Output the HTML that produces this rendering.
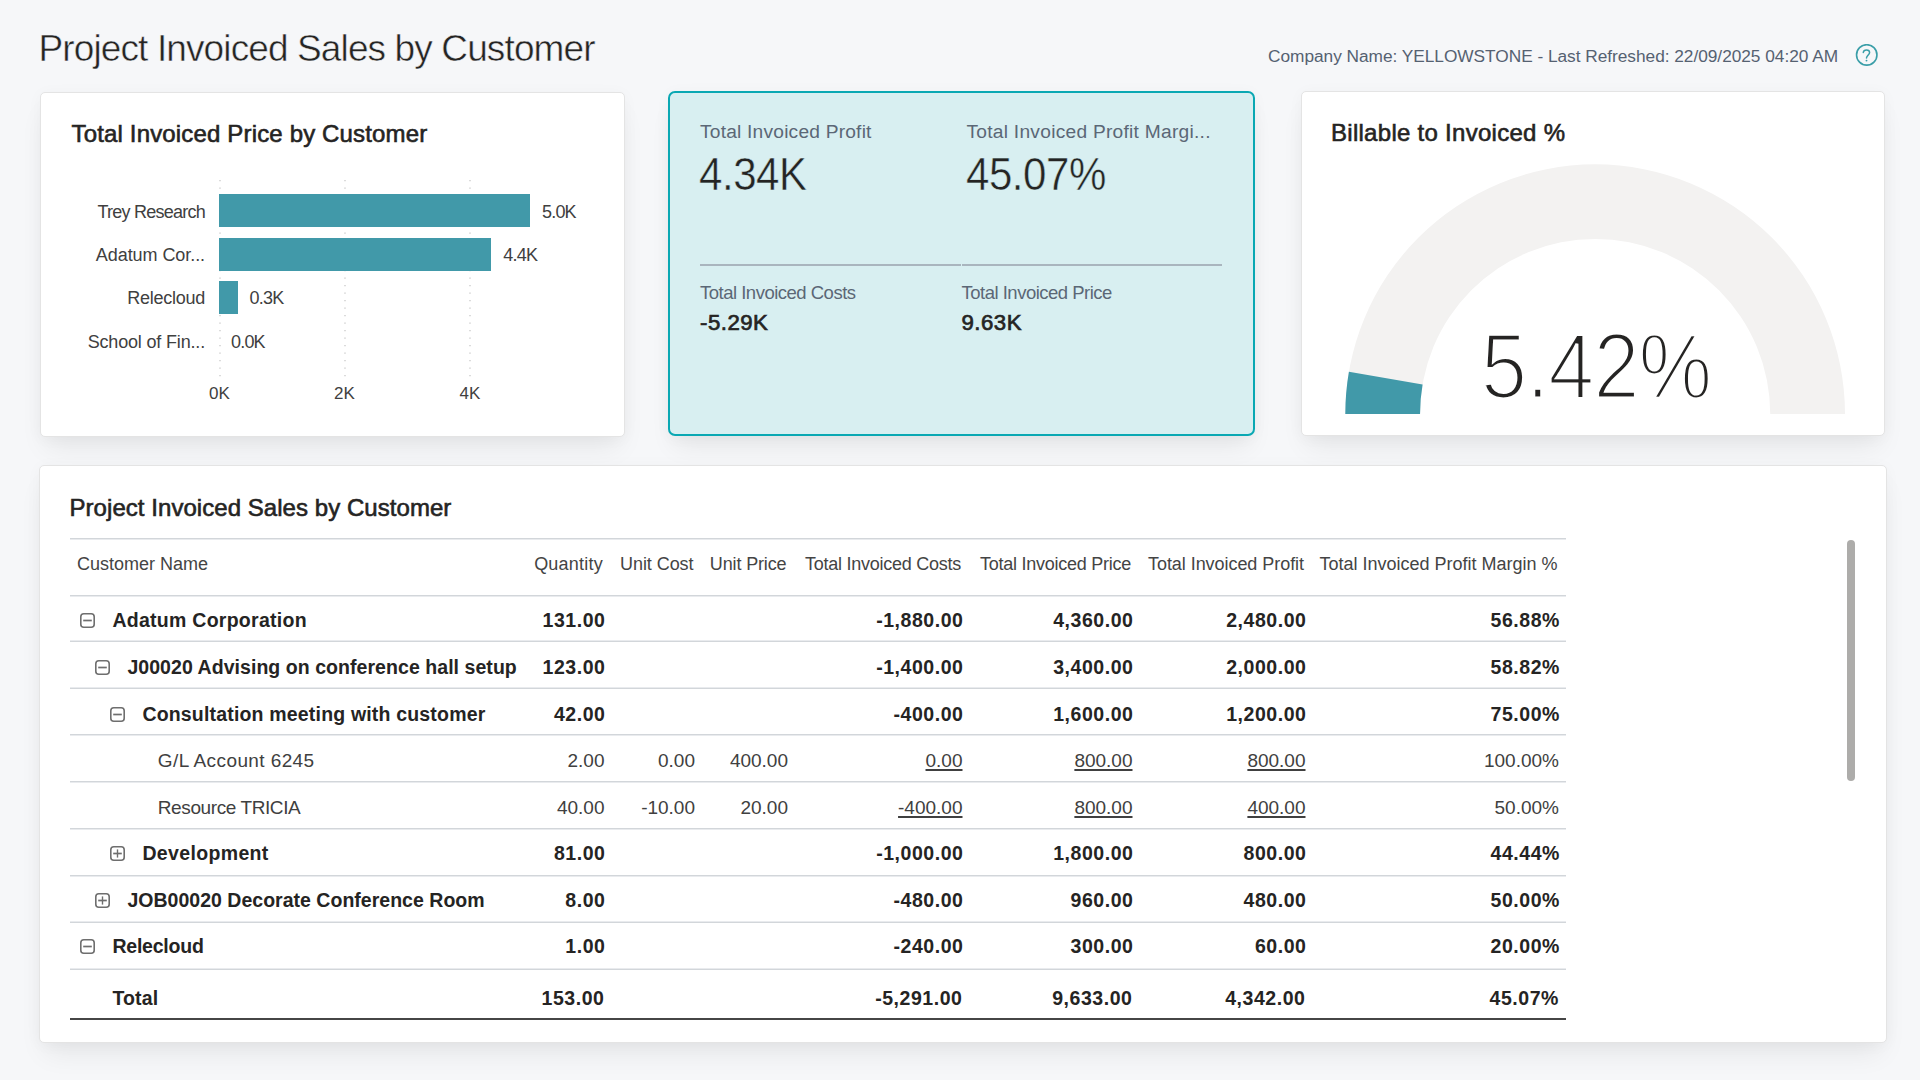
<!DOCTYPE html>
<html><head><meta charset="utf-8"><title>Project Invoiced Sales by Customer</title>
<style>
html,body{margin:0;padding:0;}
body{width:1920px;height:1080px;overflow:hidden;position:relative;background:#f6f7f9;font-family:"Liberation Sans", sans-serif;}
.t{position:absolute;white-space:nowrap;line-height:1;}
</style></head><body>
<div class="t" style="left:38.5px;top:30.08px;font-size:37px;font-weight:400;color:#252423;letter-spacing:-0.88px;-webkit-text-stroke:0.5px #f6f7f9;">Project Invoiced Sales by Customer</div>
<div class="t" style="right:82px;top:48.36px;font-size:17.3px;font-weight:400;color:#556171;letter-spacing:-0.03px;">Company Name: YELLOWSTONE - Last Refreshed: 22/09/2025 04:20 AM</div>
<svg style="position:absolute;left:1855px;top:44px" width="24" height="24" viewBox="0 0 24 24"><circle cx="11.75" cy="10.9" r="10.2" fill="none" stroke="#3a9ea8" stroke-width="1.6"/><path d="M8.3 8.5 C8.5 6.8 9.8 5.9 11.5 5.9 C13.3 5.9 14.6 7.0 14.6 8.5 C14.6 9.9 13.5 10.8 12.6 11.8 C11.9 12.6 11.5 13.2 11.5 13.9" fill="none" stroke="#3a9ea8" stroke-width="1.5" stroke-linecap="round"/><circle cx="11.5" cy="16.6" r="0.95" fill="#3a9ea8"/></svg>
<div style="position:absolute;left:40px;top:92px;width:585px;height:344.5px;background:#fff;border:1px solid #e4e4e4;border-radius:5px;box-shadow:0 16px 26px -6px rgba(0,0,0,0.07),0 2px 16px rgba(0,0,0,0.035);box-sizing:border-box;"></div>
<div class="t" style="left:71.5px;top:122.48px;font-size:24px;font-weight:400;color:#252423;letter-spacing:0.16px;-webkit-text-stroke:0.6px #252423;">Total Invoiced Price by Customer</div>
<svg style="position:absolute;left:218.5px;top:178px" width="2" height="200"><line x1="1" y1="2" x2="1" y2="200" stroke="#c4c4c4" stroke-width="1.2" stroke-dasharray="1.2 6.3"/></svg>
<svg style="position:absolute;left:343.5px;top:178px" width="2" height="200"><line x1="1" y1="2" x2="1" y2="200" stroke="#c4c4c4" stroke-width="1.2" stroke-dasharray="1.2 6.3"/></svg>
<svg style="position:absolute;left:469px;top:178px" width="2" height="200"><line x1="1" y1="2" x2="1" y2="200" stroke="#c4c4c4" stroke-width="1.2" stroke-dasharray="1.2 6.3"/></svg>
<div style="position:absolute;left:219px;top:194.4px;width:311px;height:33px;background:#4199a9;"></div>
<div class="t" style="right:1715px;top:202.66px;font-size:18px;font-weight:400;color:#404040;letter-spacing:-0.75px;">Trey Research</div>
<div class="t" style="left:542px;top:202.66px;font-size:18px;font-weight:400;color:#404040;letter-spacing:-0.8px;">5.0K</div>
<div style="position:absolute;left:219px;top:237.6px;width:272.3px;height:33px;background:#4199a9;"></div>
<div class="t" style="right:1715px;top:245.86px;font-size:18px;font-weight:400;color:#404040;letter-spacing:-0.07px;">Adatum Cor...</div>
<div class="t" style="left:503.3px;top:245.86px;font-size:18px;font-weight:400;color:#404040;letter-spacing:-0.8px;">4.4K</div>
<div style="position:absolute;left:219px;top:281.1px;width:18.599999999999994px;height:33px;background:#4199a9;"></div>
<div class="t" style="right:1715px;top:289.36px;font-size:18px;font-weight:400;color:#404040;letter-spacing:-0.25px;">Relecloud</div>
<div class="t" style="left:249.6px;top:289.36px;font-size:18px;font-weight:400;color:#404040;letter-spacing:-0.8px;">0.3K</div>
<div class="t" style="right:1715px;top:332.76px;font-size:18px;font-weight:400;color:#404040;letter-spacing:-0.17px;">School of Fin...</div>
<div class="t" style="left:231px;top:332.76px;font-size:18px;font-weight:400;color:#404040;letter-spacing:-0.8px;">0.0K</div>
<div class="t" style="left:219.5px;transform:translateX(-50%);top:384.51px;font-size:17px;font-weight:400;color:#404040;">0K</div>
<div class="t" style="left:344.5px;transform:translateX(-50%);top:384.51px;font-size:17px;font-weight:400;color:#404040;">2K</div>
<div class="t" style="left:470px;transform:translateX(-50%);top:384.51px;font-size:17px;font-weight:400;color:#404040;">4K</div>
<div style="position:absolute;left:668px;top:91px;width:587px;height:345px;background:#d8eff1;border:2px solid #0aa8b3;border-radius:7px;box-shadow:0 16px 26px -6px rgba(0,0,0,0.07),0 2px 16px rgba(0,0,0,0.035);box-sizing:border-box;"></div>
<div class="t" style="left:700px;top:121.95px;font-size:19.2px;font-weight:400;color:#5b6776;letter-spacing:0.2px;">Total Invoiced Profit</div>
<div class="t" style="left:699px;top:151.39px;font-size:46.2px;font-weight:400;color:#252423;letter-spacing:-0.5px;-webkit-text-stroke:0.5px #d8eff1;transform:scaleX(0.91);transform-origin:0 0;">4.34K</div>
<div class="t" style="left:966.5px;top:121.95px;font-size:19.2px;font-weight:400;color:#5b6776;letter-spacing:0.25px;">Total Invoiced Profit Margi...</div>
<div class="t" style="left:965.5px;top:151.39px;font-size:46.2px;font-weight:400;color:#252423;letter-spacing:-0.5px;-webkit-text-stroke:0.5px #d8eff1;transform:scaleX(0.91);transform-origin:0 0;">45.07%</div>
<div style="position:absolute;left:699.5px;top:264px;width:261.5px;height:1.6px;background:#a9b5be;"></div>
<div style="position:absolute;left:962px;top:264px;width:260px;height:1.6px;background:#a9b5be;"></div>
<div class="t" style="left:700px;top:283.54px;font-size:18.5px;font-weight:400;color:#5b6776;letter-spacing:-0.5px;">Total Invoiced Costs</div>
<div class="t" style="left:700px;top:312.01px;font-size:22.2px;font-weight:400;color:#252423;letter-spacing:0.5px;-webkit-text-stroke:0.7px #252423;">-5.29K</div>
<div class="t" style="left:961.5px;top:283.54px;font-size:18.5px;font-weight:400;color:#5b6776;letter-spacing:-0.5px;">Total Invoiced Price</div>
<div class="t" style="left:961.5px;top:312.01px;font-size:22.2px;font-weight:400;color:#252423;letter-spacing:0.5px;-webkit-text-stroke:0.7px #252423;">9.63K</div>
<div style="position:absolute;left:1301px;top:91px;width:584px;height:345px;background:#fff;border:1px solid #e4e4e4;border-radius:5px;box-shadow:0 16px 26px -6px rgba(0,0,0,0.07),0 2px 16px rgba(0,0,0,0.035);box-sizing:border-box;"></div>
<div class="t" style="left:1331px;top:121.28px;font-size:24px;font-weight:400;color:#252423;letter-spacing:0.28px;-webkit-text-stroke:0.6px #252423;">Billable to Invoiced %</div>
<svg style="position:absolute;left:1301px;top:91px" width="584" height="345"><path d="M44.30 323.10 A249.85 249.85 0 0 1 544.00 323.10 L469.25 323.10 A175.1 175.1 0 0 0 119.05 323.10 Z" fill="#f3f2f1"/><path d="M44.30 323.10 A249.85 249.85 0 0 1 47.91 280.76 L121.58 293.43 A175.1 175.1 0 0 0 119.05 323.10 Z" fill="#4199a9"/></svg>
<div class="t" style="left:1481px;top:320.30px;font-size:92.5px;font-weight:400;color:#252423;letter-spacing:-1px;-webkit-text-stroke:3.2px #fff;transform:scaleX(0.895);transform-origin:0 0;">5.42%</div>
<div style="position:absolute;left:39px;top:465px;width:1848px;height:578px;background:#fff;border:1px solid #e4e4e4;border-radius:5px;box-shadow:0 16px 26px -6px rgba(0,0,0,0.07),0 2px 16px rgba(0,0,0,0.035);box-sizing:border-box;"></div>
<div class="t" style="left:69.5px;top:495.68px;font-size:24px;font-weight:400;color:#252423;letter-spacing:0.05px;-webkit-text-stroke:0.6px #252423;">Project Invoiced Sales by Customer</div>
<div style="position:absolute;left:70px;top:538px;width:1496px;height:1px;background:#d2d6da;box-shadow:0 1px 0 #e9ebee;"></div>
<div style="position:absolute;left:70px;top:595px;width:1496px;height:1px;background:#d2d6da;box-shadow:0 1px 0 #e9ebee;"></div>
<div style="position:absolute;left:70px;top:641px;width:1496px;height:1px;background:#d2d6da;box-shadow:0 -1px 0 #e9ebee;"></div>
<div style="position:absolute;left:70px;top:688px;width:1496px;height:1px;background:#d2d6da;box-shadow:0 -1px 0 #e9ebee;"></div>
<div style="position:absolute;left:70px;top:734px;width:1496px;height:1px;background:#d2d6da;box-shadow:0 1px 0 #e9ebee;"></div>
<div style="position:absolute;left:70px;top:781px;width:1496px;height:1px;background:#d2d6da;box-shadow:0 1px 0 #e9ebee;"></div>
<div style="position:absolute;left:70px;top:828px;width:1496px;height:1px;background:#d2d6da;box-shadow:0 1px 0 #e9ebee;"></div>
<div style="position:absolute;left:70px;top:875px;width:1496px;height:1px;background:#d2d6da;box-shadow:0 1px 0 #e9ebee;"></div>
<div style="position:absolute;left:70px;top:922px;width:1496px;height:1px;background:#d2d6da;box-shadow:0 -1px 0 #e9ebee;"></div>
<div style="position:absolute;left:70px;top:969px;width:1496px;height:1px;background:#d2d6da;box-shadow:0 -1px 0 #e9ebee;"></div>
<div style="position:absolute;left:70px;top:1018px;width:1496px;height:2px;background:#464646;"></div>
<div style="position:absolute;left:1847px;top:539.5px;width:8px;height:241px;background:#adacaa;border-radius:4px;"></div>
<div class="t" style="left:77px;top:555.16px;font-size:18px;font-weight:400;color:#444444;">Customer Name</div>
<div class="t" style="right:1317.0px;top:555.16px;font-size:18px;font-weight:400;color:#444444;letter-spacing:0.23px;">Quantity</div>
<div class="t" style="right:1226.5px;top:555.16px;font-size:18px;font-weight:400;color:#444444;letter-spacing:-0.06px;">Unit Cost</div>
<div class="t" style="right:1133.5px;top:555.16px;font-size:18px;font-weight:400;color:#444444;letter-spacing:-0.13px;">Unit Price</div>
<div class="t" style="right:959.0px;top:555.16px;font-size:18px;font-weight:400;color:#444444;letter-spacing:-0.25px;">Total Invoiced Costs</div>
<div class="t" style="right:789.0px;top:555.16px;font-size:18px;font-weight:400;color:#444444;letter-spacing:-0.25px;">Total Invoiced Price</div>
<div class="t" style="right:616.0px;top:555.16px;font-size:18px;font-weight:400;color:#444444;letter-spacing:-0.05px;">Total Invoiced Profit</div>
<div class="t" style="right:362.5px;top:555.16px;font-size:18px;font-weight:400;color:#444444;">Total Invoiced Profit Margin %</div>
<div class="t" style="left:112.4px;top:611.19px;font-size:19.5px;font-weight:700;color:#252423;letter-spacing:0.27px;">Adatum Corporation</div>
<svg style="position:absolute;left:80.0px;top:613.0px" width="15" height="15" viewBox="0 0 15 15"><rect x="0.8" y="0.8" width="13.4" height="13.4" rx="3" fill="none" stroke="#6e6e6e" stroke-width="1.6"/><line x1="3.2" y1="7.5" x2="11.8" y2="7.5" stroke="#6e6e6e" stroke-width="1.7"/></svg>
<div class="t" style="right:1314.5px;top:611.19px;font-size:19.5px;font-weight:700;color:#252423;letter-spacing:0.55px;">131.00</div>
<div class="t" style="right:956.5px;top:611.19px;font-size:19.5px;font-weight:700;color:#252423;letter-spacing:0.55px;">-1,880.00</div>
<div class="t" style="right:786.5px;top:611.19px;font-size:19.5px;font-weight:700;color:#252423;letter-spacing:0.55px;">4,360.00</div>
<div class="t" style="right:613.5px;top:611.19px;font-size:19.5px;font-weight:700;color:#252423;letter-spacing:0.55px;">2,480.00</div>
<div class="t" style="right:360px;top:611.19px;font-size:19.5px;font-weight:700;color:#252423;letter-spacing:0.55px;">56.88%</div>
<div class="t" style="left:127.4px;top:658.39px;font-size:19.5px;font-weight:700;color:#252423;letter-spacing:0.055px;">J00020 Advising on conference hall setup</div>
<svg style="position:absolute;left:95.1px;top:660.2px" width="15" height="15" viewBox="0 0 15 15"><rect x="0.8" y="0.8" width="13.4" height="13.4" rx="3" fill="none" stroke="#6e6e6e" stroke-width="1.6"/><line x1="3.2" y1="7.5" x2="11.8" y2="7.5" stroke="#6e6e6e" stroke-width="1.7"/></svg>
<div class="t" style="right:1314.5px;top:658.39px;font-size:19.5px;font-weight:700;color:#252423;letter-spacing:0.55px;">123.00</div>
<div class="t" style="right:956.5px;top:658.39px;font-size:19.5px;font-weight:700;color:#252423;letter-spacing:0.55px;">-1,400.00</div>
<div class="t" style="right:786.5px;top:658.39px;font-size:19.5px;font-weight:700;color:#252423;letter-spacing:0.55px;">3,400.00</div>
<div class="t" style="right:613.5px;top:658.39px;font-size:19.5px;font-weight:700;color:#252423;letter-spacing:0.55px;">2,000.00</div>
<div class="t" style="right:360px;top:658.39px;font-size:19.5px;font-weight:700;color:#252423;letter-spacing:0.55px;">58.82%</div>
<div class="t" style="left:142.4px;top:704.84px;font-size:19.5px;font-weight:700;color:#252423;letter-spacing:0.18px;">Consultation meeting with customer</div>
<svg style="position:absolute;left:110.2px;top:706.7px" width="15" height="15" viewBox="0 0 15 15"><rect x="0.8" y="0.8" width="13.4" height="13.4" rx="3" fill="none" stroke="#6e6e6e" stroke-width="1.6"/><line x1="3.2" y1="7.5" x2="11.8" y2="7.5" stroke="#6e6e6e" stroke-width="1.7"/></svg>
<div class="t" style="right:1314.5px;top:704.84px;font-size:19.5px;font-weight:700;color:#252423;letter-spacing:0.55px;">42.00</div>
<div class="t" style="right:956.5px;top:704.84px;font-size:19.5px;font-weight:700;color:#252423;letter-spacing:0.55px;">-400.00</div>
<div class="t" style="right:786.5px;top:704.84px;font-size:19.5px;font-weight:700;color:#252423;letter-spacing:0.55px;">1,600.00</div>
<div class="t" style="right:613.5px;top:704.84px;font-size:19.5px;font-weight:700;color:#252423;letter-spacing:0.55px;">1,200.00</div>
<div class="t" style="right:360px;top:704.84px;font-size:19.5px;font-weight:700;color:#252423;letter-spacing:0.55px;">75.00%</div>
<div class="t" style="left:157.8px;top:750.87px;font-size:19px;font-weight:400;color:#404040;letter-spacing:0.4px;">G/L Account 6245</div>
<div class="t" style="right:1315.5px;top:750.87px;font-size:19px;font-weight:400;color:#404040;">2.00</div>
<div class="t" style="right:1225px;top:750.87px;font-size:19px;font-weight:400;color:#404040;">0.00</div>
<div class="t" style="right:1132px;top:750.87px;font-size:19px;font-weight:400;color:#404040;">400.00</div>
<div class="t" style="right:957.5px;top:750.87px;font-size:19px;font-weight:400;color:#404040;text-decoration:underline;text-underline-offset:2px;text-decoration-thickness:1.5px;">0.00</div>
<div class="t" style="right:787.5px;top:750.87px;font-size:19px;font-weight:400;color:#404040;text-decoration:underline;text-underline-offset:2px;text-decoration-thickness:1.5px;">800.00</div>
<div class="t" style="right:614.5px;top:750.87px;font-size:19px;font-weight:400;color:#404040;text-decoration:underline;text-underline-offset:2px;text-decoration-thickness:1.5px;">800.00</div>
<div class="t" style="right:361px;top:750.87px;font-size:19px;font-weight:400;color:#404040;">100.00%</div>
<div class="t" style="left:157.8px;top:797.77px;font-size:19px;font-weight:400;color:#404040;letter-spacing:-0.4px;">Resource TRICIA</div>
<div class="t" style="right:1315.5px;top:797.77px;font-size:19px;font-weight:400;color:#404040;">40.00</div>
<div class="t" style="right:1225px;top:797.77px;font-size:19px;font-weight:400;color:#404040;">-10.00</div>
<div class="t" style="right:1132px;top:797.77px;font-size:19px;font-weight:400;color:#404040;">20.00</div>
<div class="t" style="right:957.5px;top:797.77px;font-size:19px;font-weight:400;color:#404040;text-decoration:underline;text-underline-offset:2px;text-decoration-thickness:1.5px;">-400.00</div>
<div class="t" style="right:787.5px;top:797.77px;font-size:19px;font-weight:400;color:#404040;text-decoration:underline;text-underline-offset:2px;text-decoration-thickness:1.5px;">800.00</div>
<div class="t" style="right:614.5px;top:797.77px;font-size:19px;font-weight:400;color:#404040;text-decoration:underline;text-underline-offset:2px;text-decoration-thickness:1.5px;">400.00</div>
<div class="t" style="right:361px;top:797.77px;font-size:19px;font-weight:400;color:#404040;">50.00%</div>
<div class="t" style="left:142.4px;top:843.89px;font-size:19.5px;font-weight:700;color:#252423;letter-spacing:0.35px;">Development</div>
<svg style="position:absolute;left:110.2px;top:845.7px" width="15" height="15" viewBox="0 0 15 15"><rect x="0.8" y="0.8" width="13.4" height="13.4" rx="3" fill="none" stroke="#6e6e6e" stroke-width="1.6"/><line x1="3.2" y1="7.5" x2="11.8" y2="7.5" stroke="#6e6e6e" stroke-width="1.7"/><line x1="7.5" y1="3.4" x2="7.5" y2="11.6" stroke="#6e6e6e" stroke-width="1.4"/></svg>
<div class="t" style="right:1314.5px;top:843.89px;font-size:19.5px;font-weight:700;color:#252423;letter-spacing:0.55px;">81.00</div>
<div class="t" style="right:956.5px;top:843.89px;font-size:19.5px;font-weight:700;color:#252423;letter-spacing:0.55px;">-1,000.00</div>
<div class="t" style="right:786.5px;top:843.89px;font-size:19.5px;font-weight:700;color:#252423;letter-spacing:0.55px;">1,800.00</div>
<div class="t" style="right:613.5px;top:843.89px;font-size:19.5px;font-weight:700;color:#252423;letter-spacing:0.55px;">800.00</div>
<div class="t" style="right:360px;top:843.89px;font-size:19.5px;font-weight:700;color:#252423;letter-spacing:0.55px;">44.44%</div>
<div class="t" style="left:127.4px;top:891.09px;font-size:19.5px;font-weight:700;color:#252423;letter-spacing:0.02px;">JOB00020 Decorate Conference Room</div>
<svg style="position:absolute;left:95.1px;top:892.9px" width="15" height="15" viewBox="0 0 15 15"><rect x="0.8" y="0.8" width="13.4" height="13.4" rx="3" fill="none" stroke="#6e6e6e" stroke-width="1.6"/><line x1="3.2" y1="7.5" x2="11.8" y2="7.5" stroke="#6e6e6e" stroke-width="1.7"/><line x1="7.5" y1="3.4" x2="7.5" y2="11.6" stroke="#6e6e6e" stroke-width="1.4"/></svg>
<div class="t" style="right:1314.5px;top:891.09px;font-size:19.5px;font-weight:700;color:#252423;letter-spacing:0.55px;">8.00</div>
<div class="t" style="right:956.5px;top:891.09px;font-size:19.5px;font-weight:700;color:#252423;letter-spacing:0.55px;">-480.00</div>
<div class="t" style="right:786.5px;top:891.09px;font-size:19.5px;font-weight:700;color:#252423;letter-spacing:0.55px;">960.00</div>
<div class="t" style="right:613.5px;top:891.09px;font-size:19.5px;font-weight:700;color:#252423;letter-spacing:0.55px;">480.00</div>
<div class="t" style="right:360px;top:891.09px;font-size:19.5px;font-weight:700;color:#252423;letter-spacing:0.55px;">50.00%</div>
<div class="t" style="left:112.4px;top:936.99px;font-size:19.5px;font-weight:700;color:#252423;letter-spacing:-0.22px;">Relecloud</div>
<svg style="position:absolute;left:80.0px;top:938.8px" width="15" height="15" viewBox="0 0 15 15"><rect x="0.8" y="0.8" width="13.4" height="13.4" rx="3" fill="none" stroke="#6e6e6e" stroke-width="1.6"/><line x1="3.2" y1="7.5" x2="11.8" y2="7.5" stroke="#6e6e6e" stroke-width="1.7"/></svg>
<div class="t" style="right:1314.5px;top:936.99px;font-size:19.5px;font-weight:700;color:#252423;letter-spacing:0.55px;">1.00</div>
<div class="t" style="right:956.5px;top:936.99px;font-size:19.5px;font-weight:700;color:#252423;letter-spacing:0.55px;">-240.00</div>
<div class="t" style="right:786.5px;top:936.99px;font-size:19.5px;font-weight:700;color:#252423;letter-spacing:0.55px;">300.00</div>
<div class="t" style="right:613.5px;top:936.99px;font-size:19.5px;font-weight:700;color:#252423;letter-spacing:0.55px;">60.00</div>
<div class="t" style="right:360px;top:936.99px;font-size:19.5px;font-weight:700;color:#252423;letter-spacing:0.55px;">20.00%</div>
<div class="t" style="left:112.4px;top:989.19px;font-size:19.5px;font-weight:700;color:#252423;letter-spacing:0.15px;">Total</div>
<div class="t" style="right:1315.5px;top:989.19px;font-size:19.5px;font-weight:700;color:#252423;letter-spacing:0.55px;">153.00</div>
<div class="t" style="right:957.5px;top:989.19px;font-size:19.5px;font-weight:700;color:#252423;letter-spacing:0.55px;">-5,291.00</div>
<div class="t" style="right:787.5px;top:989.19px;font-size:19.5px;font-weight:700;color:#252423;letter-spacing:0.55px;">9,633.00</div>
<div class="t" style="right:614.5px;top:989.19px;font-size:19.5px;font-weight:700;color:#252423;letter-spacing:0.55px;">4,342.00</div>
<div class="t" style="right:361px;top:989.19px;font-size:19.5px;font-weight:700;color:#252423;letter-spacing:0.55px;">45.07%</div>
</body></html>
